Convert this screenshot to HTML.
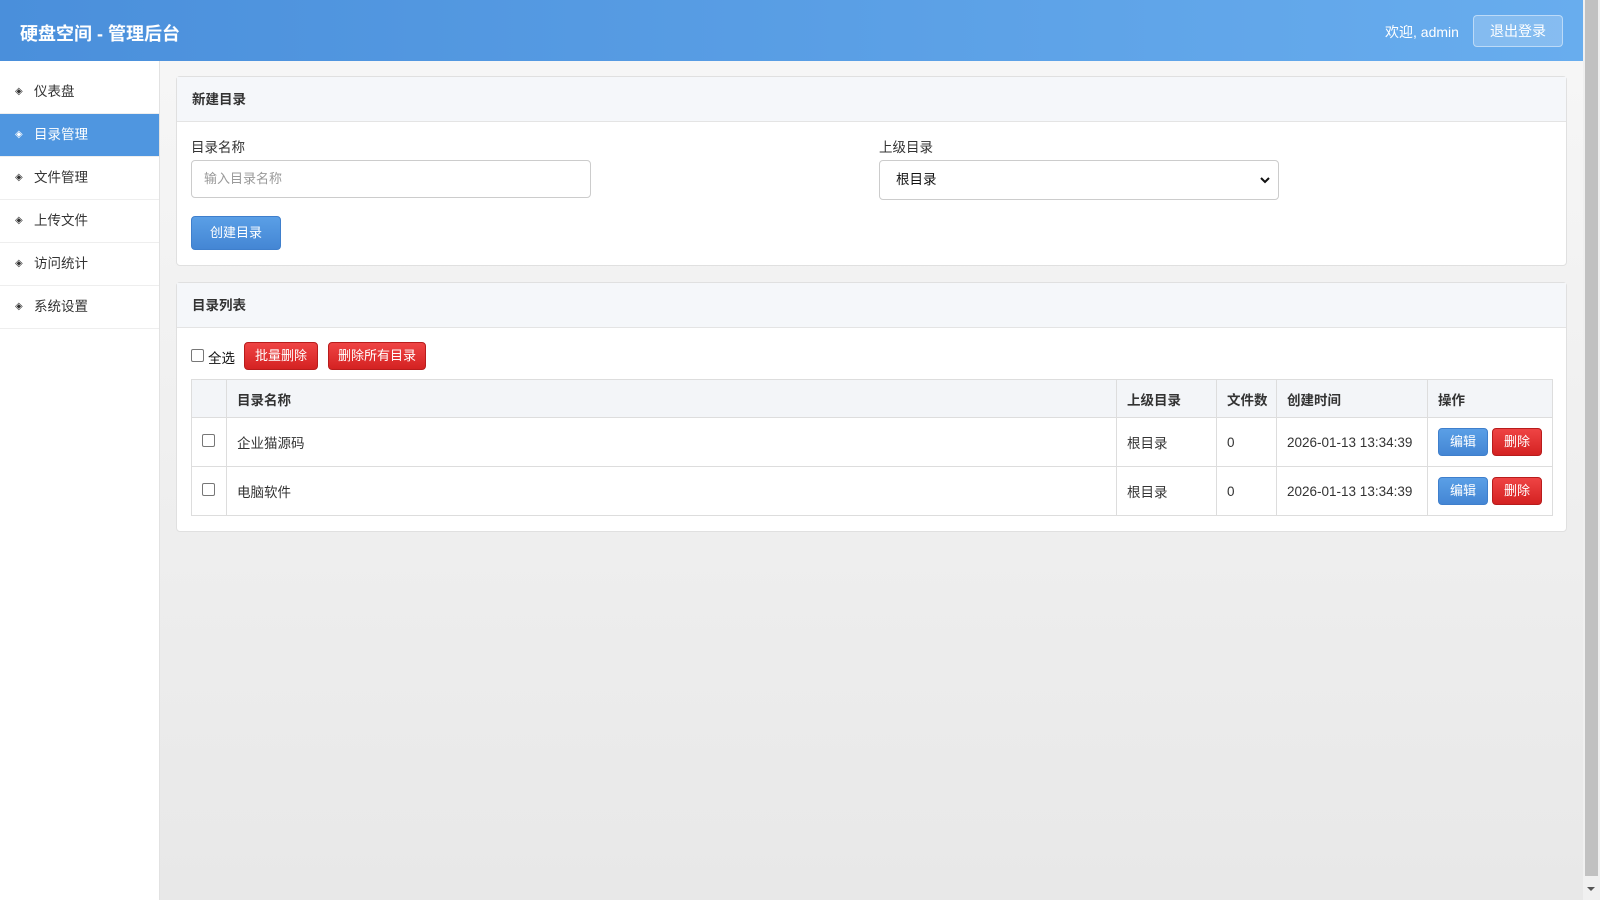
<!DOCTYPE html>
<html><head><meta charset="utf-8"><style>
*{box-sizing:border-box;margin:0;padding:0}
html,body{width:1600px;height:900px;overflow:hidden}
body{font-family:"Liberation Sans","Noto Sans CJK SC",sans-serif;font-size:13.5px;color:#333;background:linear-gradient(#f7f7f7,#e8e8e8);position:relative}
.hdr{position:absolute;left:0;top:0;width:1583px;height:61px;background:linear-gradient(90deg,#4a8fdb,#68adee);color:#fff}
.hdr h1{position:absolute;left:20px;top:20px;font-size:18px;font-weight:bold}
.hdr .wel{position:absolute;left:1385px;top:22px;font-size:14px}
.hdr .out{position:absolute;left:1473px;top:15px;width:90px;height:32px;border:1px solid rgba(255,255,255,.45);background:rgba(255,255,255,.2);border-radius:4px;text-align:center;line-height:30px;font-size:14px}
.side{position:absolute;left:0;top:61px;width:160px;height:839px;background:#fff;border-right:1px solid #e2e2e2;padding-top:10px}
.side div{height:43px;line-height:42px;border-bottom:1px solid #eee;padding-left:34px;position:relative;font-size:13.5px}
.side div:before{content:"◈";position:absolute;left:15px;font-size:10px;top:0}
.side .act{background:#4f96e0;color:#fff}
.card{position:absolute;left:176px;width:1391px;background:#fff;border:1px solid #e0e0e0;border-radius:4px}
.ch{height:45px;background:#f5f7fa;border-bottom:1px solid #e4e4e4;padding-left:15px;line-height:45px;font-weight:bold;font-size:13.5px}
.abs{position:absolute}
.inp{border:1px solid #ccc;border-radius:4px;background:#fff}
.btn{position:absolute;color:#fff;border-radius:4px;text-align:center;font-size:13px}
.blue{background:linear-gradient(#5a9fe6,#4486d4);border:1px solid #3f7fcc}
.red{background:linear-gradient(#ef4444,#d42222);border:1px solid #b81c1c}
table{position:absolute;left:14px;top:96px;border-collapse:collapse;width:1362px}
td,th{border:1px solid #ddd;text-align:left;padding-left:10px;font-size:13.5px}
th{height:38px;background:#f3f5f8;font-weight:bold}
td{height:49px;position:relative}
.cb{width:13px;height:13px;border:1px solid #777;border-radius:2px;display:inline-block}
</style></head><body>
<div class="hdr"><h1>硬盘空间 - 管理后台</h1><span class="wel">欢迎, admin</span><div class="out">退出登录</div></div>
<div class="side"><div>仪表盘</div><div class="act">目录管理</div><div>文件管理</div><div>上传文件</div><div>访问统计</div><div>系统设置</div></div>
<div class="card" style="top:76px;height:190px">
<div class="ch">新建目录</div>
<div class="abs" style="left:14px;top:59px">目录名称</div>
<div class="abs inp" style="left:14px;top:83px;width:400px;height:38px;color:#999;padding-left:12px;line-height:36px;font-size:13px">输入目录名称</div>
<div class="abs" style="left:702px;top:59px">上级目录</div>
<div class="abs inp" style="left:702px;top:83px;width:400px;height:40px;padding-left:16px;line-height:38px;color:#111">根目录<svg style="position:absolute;right:8px;top:15px" width="10" height="8" viewBox="0 0 10 8"><path d="M1 2l4 4 4-4" stroke="#111" stroke-width="2" fill="none"/></svg></div>
<div class="btn blue" style="left:14px;top:139px;width:90px;height:34px;line-height:32px">创建目录</div>
</div>
<div class="card" style="top:282px;height:250px">
<div class="ch">目录列表</div>
<span class="cb abs" style="left:14px;top:66px"></span><span class="abs" style="left:31px;top:64px;color:#111">全选</span>
<div class="btn red" style="left:67px;top:59px;width:74px;height:28px;line-height:26px">批量删除</div>
<div class="btn red" style="left:151px;top:59px;width:98px;height:28px;line-height:26px">删除所有目录</div>
<table>
<tr><th style="width:35px"></th><th style="width:890px">目录名称</th><th style="width:100px">上级目录</th><th style="width:60px">文件数</th><th style="width:151px">创建时间</th><th>操作</th></tr>
<tr><td><span class="cb"></span></td><td>企业猫源码</td><td>根目录</td><td>0</td><td>2026-01-13 13:34:39</td><td><div class="btn blue" style="left:10px;top:10px;width:50px;height:28px;line-height:26px">编辑</div><div class="btn red" style="left:64px;top:10px;width:50px;height:28px;line-height:26px">删除</div></td></tr>
<tr><td><span class="cb"></span></td><td>电脑软件</td><td>根目录</td><td>0</td><td>2026-01-13 13:34:39</td><td><div class="btn blue" style="left:10px;top:10px;width:50px;height:28px;line-height:26px">编辑</div><div class="btn red" style="left:64px;top:10px;width:50px;height:28px;line-height:26px">删除</div></td></tr>
</table>
</div>
<div class="abs" style="left:1583px;top:0;width:17px;height:900px;background:#f0f0f0"><div style="position:absolute;left:2px;top:0;width:13px;height:876px;background:#c1c1c1"></div><div style="position:absolute;left:4px;top:887px;border-left:4px solid transparent;border-right:4px solid transparent;border-top:4px solid #555"></div></div>
</body></html>
